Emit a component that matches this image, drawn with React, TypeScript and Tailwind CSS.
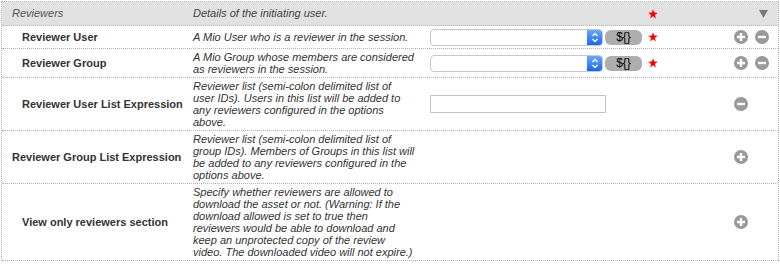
import React from "react";

const Star = () => (
  <svg width="10" height="10" viewBox="0 0 10 10" className="block">
    <polygon
      points="5,0.3 6.2,3.6 9.7,3.7 6.9,5.9 7.9,9.4 5,7.3 2.1,9.4 3.1,5.9 0.3,3.7 3.8,3.6"
      fill="#ff0000"
    />
  </svg>
);

const PlusIcon = () => (
  <svg width="14" height="14" viewBox="0 0 14 14" className="block">
    <circle cx="7" cy="7" r="7" fill="#999999" />
    <rect x="3" y="5.8" width="8" height="2.4" fill="#ffffff" />
    <rect x="5.8" y="3" width="2.4" height="8" fill="#ffffff" />
  </svg>
);

const MinusIcon = () => (
  <svg width="14" height="14" viewBox="0 0 14 14" className="block">
    <circle cx="7" cy="7" r="7" fill="#999999" />
    <rect x="3" y="5.8" width="8" height="2.4" fill="#ffffff" />
  </svg>
);

const SelectBox = () => (
  <div className="flex h-[17px] w-[173px] rounded-[4px] border border-[#c8c8c8] bg-white overflow-hidden">
    <div className="flex-1" />
    <div className="flex w-[15px] items-center justify-center bg-gradient-to-b from-[#6aa8fb] to-[#1667ee]">
      <svg width="8" height="11" viewBox="0 0 8 11" className="block">
        <polyline points="1.5,4 4,1.5 6.5,4" fill="none" stroke="#ffffff" strokeWidth="1.3" />
        <polyline points="1.5,7 4,9.5 6.5,7" fill="none" stroke="#ffffff" strokeWidth="1.3" />
      </svg>
    </div>
  </div>
);

const ExprButton = () => (
  <div className="ml-[2px] flex h-[15px] w-[37px] items-center justify-center rounded-[6px] bg-[#adadad] text-[12px] leading-none text-black">
    ${"{}"}
  </div>
);

type RowProps = {
  height: string;
  label: string;
  labelPad?: string;
  lines: string[];
  control?: React.ReactNode;
  star?: boolean;
  plus?: boolean;
  minus?: boolean;
};

const Row = ({ height, label, labelPad, lines, control, star, plus, minus }: RowProps) => (
  <div className={`flex items-center border-b border-dotted border-[#b4b4b4] ${height}`}>
    <div className={`w-[191px] shrink-0 whitespace-nowrap text-[11px] font-bold text-[#333333] ${labelPad ?? "pl-[20px]"}`}>
      {label}
    </div>
    <div className="w-[237px] shrink-0 text-[11px] italic leading-[12px] text-[#333333]">
      {lines.map((l, i) => (
        <div key={i} className="whitespace-nowrap">
          {l}
        </div>
      ))}
    </div>
    <div className="flex w-[215px] shrink-0 items-center">{control}</div>
    <div className="flex w-[15px] shrink-0 items-center justify-center">{star ? <Star /> : null}</div>
    <div className="ml-[74px] flex items-center gap-[7px]">
      {plus ? <PlusIcon /> : null}
      {minus ? <MinusIcon /> : null}
    </div>
  </div>
);

export default function App() {
  return (
    <div
      className="w-[780px] h-[264px] bg-white p-[1px]"
      style={{ fontFamily: '"Liberation Sans", Arial, Helvetica, sans-serif' }}
    >
      <div className="w-[778px] border border-dotted border-[#b4b4b4] border-b-0">
        <div className="flex h-[24px] items-center border-b border-dotted border-[#b4b4b4] bg-[#e1e1e1]">
          <div className="w-[191px] shrink-0 pl-[10px] text-[11px] italic text-[#555555]">Reviewers</div>
          <div className="w-[237px] shrink-0 whitespace-nowrap text-[11px] italic text-[#444444]">
            Details of the initiating user.
          </div>
          <div className="w-[215px] shrink-0" />
          <div className="flex w-[15px] shrink-0 items-center justify-center">
            <Star />
          </div>
          <div className="ml-[99px]">
            <svg width="9" height="8" viewBox="0 0 9 8" className="block">
              <polygon points="0,0 9,0 4.5,8" fill="#7a7a7a" />
            </svg>
          </div>
        </div>
        <Row
          height="h-[23px]"
          label="Reviewer User"
          lines={["A Mio User who is a reviewer in the session."]}
          control={
            <>
              <SelectBox />
              <ExprButton />
            </>
          }
          star
          plus
          minus
        />
        <Row
          height="h-[29px]"
          label="Reviewer Group"
          lines={["A Mio Group whose members are considered", "as reviewers in the session."]}
          control={
            <>
              <SelectBox />
              <ExprButton />
            </>
          }
          star
          plus
          minus
        />
        <Row
          height="h-[53px]"
          label="Reviewer User List Expression"
          lines={[
            "Reviewer list (semi-colon delimited list of",
            "user IDs). Users in this list will be added to",
            "any reviewers configured in the options",
            "above.",
          ]}
          control={<div className="h-[18px] w-[176px] border border-[#c4c4c4] bg-white" />}
          minus
        />
        <Row
          height="h-[53px]"
          label="Reviewer Group List Expression"
          labelPad="pl-[10px]"
          lines={[
            "Reviewer list (semi-colon delimited list of",
            "group IDs). Members of Groups in this list will",
            "be added to any reviewers configured in the",
            "options above.",
          ]}
          plus
        />
        <Row
          height="h-[77px]"
          label="View only reviewers section"
          lines={[
            "Specify whether reviewers are allowed to",
            "download the asset or not. (Warning: If the",
            "download allowed is set to true then",
            "reviewers would be able to download and",
            "keep an unprotected copy of the review",
            "video. The downloaded video will not expire.)",
          ]}
          plus
        />
      </div>
    </div>
  );
}
